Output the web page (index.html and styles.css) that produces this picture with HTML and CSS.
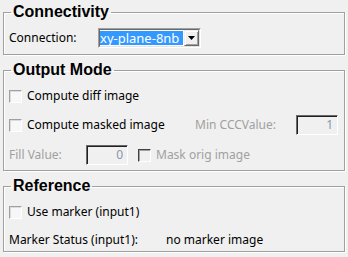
FILE: index.html
```html
<!DOCTYPE html>
<html lang="en">
<head>
    <meta charset="UTF-8">
    <meta name="viewport" content="width=device-width, initial-scale=1.0">
    <title>Compare Images</title>
    <link rel="stylesheet" href="styles.css">
</head>
<body>
    <fieldset class="group">
        <legend>Connectivity</legend>
        <div class="row">
            <span class="label conn-label">Connection:</span>
            <div class="combo">
                <div class="combo-field">
                    <span class="combo-text">xy-plane-8nb</span>
                    <span class="combo-btn">
                        <svg width="7" height="4" viewBox="0 0 7 4"><path d="M0 0h7L3.5 4z" fill="#000"/></svg>
                    </span>
                </div>
            </div>
        </div>
    </fieldset>

    <fieldset class="group output">
        <legend>Output Mode</legend>
        <div class="row">
            <span class="check"></span>
            <span class="label">Compute diff image</span>
        </div>
        <div class="row">
            <span class="check"></span>
            <span class="label grow">Compute masked image</span>
            <span class="label disabled min-label">Min CCCValue:</span>
            <span class="field">1</span>
        </div>
        <div class="row">
            <span class="label disabled fill-label">Fill Value:</span>
            <span class="field">0</span>
            <span class="check check-off mask-check"></span>
            <span class="label disabled">Mask orig image</span>
        </div>
    </fieldset>

    <fieldset class="group reference">
        <legend>Reference</legend>
        <div class="row">
            <span class="check"></span>
            <span class="label">Use marker (input1)</span>
        </div>
        <div class="row short">
            <span class="label status-label">Marker Status (input1):</span>
            <span class="label">no marker image</span>
        </div>
    </fieldset>
</body>
</html>
```

FILE: styles.css
```css
body {
    margin: 0;
    background-color: #f0f0f0;
    font-family: "Noto Sans", "Open Sans", sans-serif;
    font-size: 12px;
    color: #000;
}
.group {
    margin: 0 3px 3px 3px;
    padding: 4px 6px 6px 5px;
    border: 1px solid #a0a0a0;
    box-shadow: inset 1px 1px 0 #fff, 1px 1px 0 #fff;
    min-width: 0;
}
.group legend {
    margin-left: 2px;
    padding: 0 2px;
    font-family: "Liberation Sans", Arial, sans-serif;
    font-weight: bold;
    font-size: 16px;
    line-height: 24px;
}
.output {
    padding-bottom: 5px;
}
.output .row + .row {
    margin-top: 9px;
}
.output .row + .row + .row {
    margin-top: 10px;
}
.reference {
    padding-bottom: 3px;
}
.reference .row + .row {
    margin-top: 10px;
}
.row {
    display: flex;
    align-items: center;
    height: 20px;
}
.row.short {
    height: 16px;
}
.label {
    white-space: nowrap;
    line-height: 16px;
}
.grow {
    flex: 1;
}
.disabled {
    color: #a0a0a0;
}
.conn-label {
    width: 89px;
}
.min-label {
    margin-right: 20px;
}
.fill-label {
    width: 77px;
}
.status-label {
    width: 157px;
}
.check {
    width: 13px;
    height: 13px;
    box-sizing: border-box;
    margin-right: 5px;
    border: 1px solid;
    border-color: #a0a0a0 #fff #fff #a0a0a0;
    background: #f7f7f7;
    box-shadow: inset 1px 1px 0 #dcdcdc;
    flex: none;
}
.check-off {
    border-color: #404040 #fff #fff #404040;
    background: #f0f0f0;
    box-shadow: inset 1px 1px 0 #a0a0a0;
}
.mask-check {
    margin-left: 10px;
}
.field {
    width: 42px;
    height: 20px;
    box-sizing: border-box;
    padding-right: 4px;
    border: 1px solid;
    border-color: #696969 #fff #fff #696969;
    box-shadow: inset 1px 1px 0 #202020;
    text-align: right;
    line-height: 18px;
    color: #8896a8;
    flex: none;
}
.combo {
    width: 103px;
    height: 20px;
    box-sizing: border-box;
    border: 1px solid;
    border-color: #a0a0a0 #fff #fff #a0a0a0;
}
.combo-field {
    display: flex;
    height: 100%;
    box-sizing: border-box;
    border: 1px solid;
    border-color: #696969 #e3e3e3 #e3e3e3 #696969;
    background: #fff;
}
.combo-text {
    flex: 1;
    margin: 1px 1px 1px 0;
    background: #3399ff;
    color: #fff;
    font-size: 13px;
    line-height: 14px;
    white-space: nowrap;
}
.combo-btn {
    width: 15px;
    box-sizing: border-box;
    display: flex;
    align-items: center;
    justify-content: center;
    background: #f0f0f0;
    border: 1px solid;
    border-color: #f0f0f0 #696969 #696969 #f0f0f0;
    box-shadow: inset 1px 1px 0 #fff, inset -1px -1px 0 #a0a0a0;
}
```
